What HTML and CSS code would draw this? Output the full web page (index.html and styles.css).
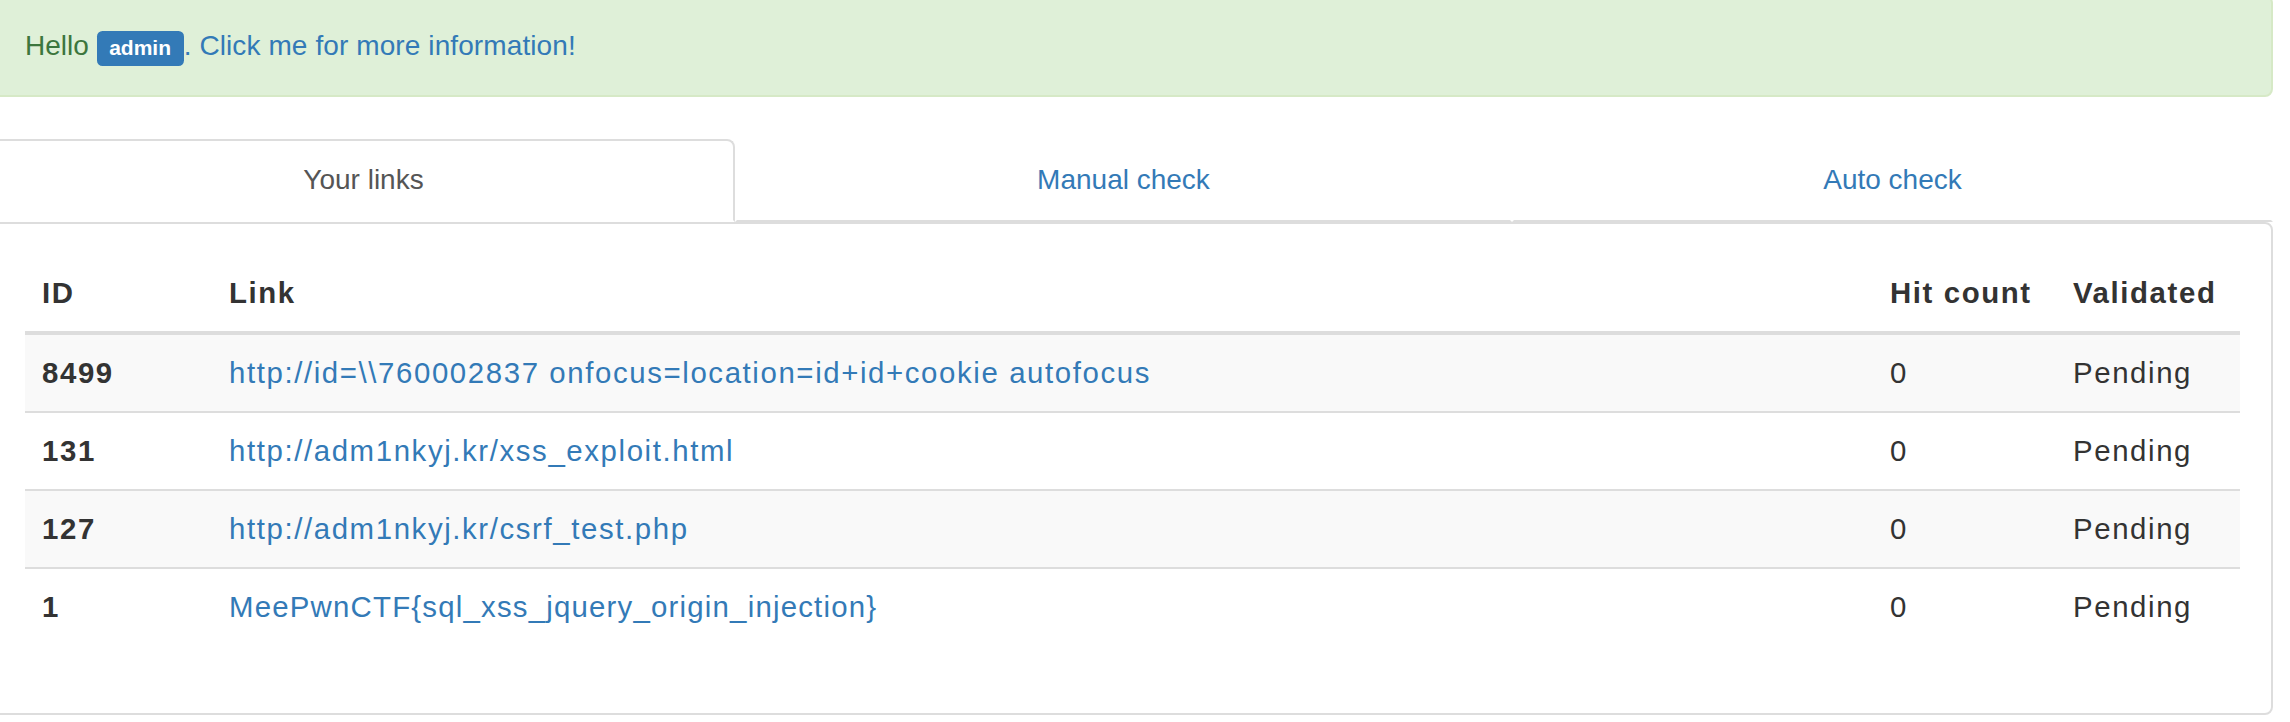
FILE: index.html
```html
<!DOCTYPE html>
<html lang="en">
<head>
<meta charset="utf-8">
<title>Your links</title>
<link rel="stylesheet" href="styles.css">
</head>
<body>
<div class="page">
  <div class="alert">Hello <span class="label">admin</span><a class="alert-link" href="#">. Click me for more information!</a></div>

  <ul class="tabs">
    <li class="tab active"><a href="#">Your links</a></li>
    <li class="tab"><a href="#">Manual check</a></li>
    <li class="tab"><a href="#">Auto check</a></li>
  </ul>

  <div class="panel">
    <table class="links">
      <colgroup>
        <col class="c-id">
        <col class="c-link">
        <col class="c-hit">
        <col class="c-val">
      </colgroup>
      <thead>
        <tr><th>ID</th><th>Link</th><th>Hit count</th><th>Validated</th></tr>
      </thead>
      <tbody>
        <tr><td class="id">8499</td><td><a href="#">http://id=\\760002837 onfocus=location=id+id+cookie autofocus</a></td><td>0</td><td>Pending</td></tr>
        <tr><td class="id">131</td><td><a href="#">http://adm1nkyj.kr/xss_exploit.html</a></td><td>0</td><td>Pending</td></tr>
        <tr><td class="id">127</td><td><a href="#">http://adm1nkyj.kr/csrf_test.php</a></td><td>0</td><td>Pending</td></tr>
        <tr><td class="id">1</td><td><a class="flag" href="#">MeePwnCTF{sql_xss_jquery_origin_injection}</a></td><td>0</td><td>Pending</td></tr>
      </tbody>
    </table>
  </div>
</div>
</body>
</html>
```
FILE: styles.css
```css
html, body {
  margin: 0;
  padding: 0;
  background: #fff;
}

.page {
  margin: -5px 0 0 -8px;
  width: 2281px;
  font-family: "Liberation Sans", Arial, Helvetica, sans-serif;
  font-size: 29.4px;
  line-height: 42px;
  color: #333;
}

a {
  color: #337ab7;
  text-decoration: none;
}

.alert {
  background: #dff0d8;
  border: 2px solid #d6e9c6;
  border-radius: 8px;
  padding: 28px 31px;
  color: #3c763d;
  font-size: 28px;
  margin-bottom: 42px;
}

.alert-link {
  letter-spacing: 0.1px;
}

.label {
  font-size: 21px;
  font-weight: bold;
  line-height: 1;
  color: #fff;
  background: #337ab7;
  padding: 5px 12.6px 7px;
  border-radius: 5.5px;
}

.tabs {
  list-style: none;
  margin: 0;
  padding: 0;
  display: grid;
  grid-template-columns: 743px 777px 1fr;
  font-size: 28px;
}

.tab {
  text-align: center;
  padding: 18px 0 19px;
  border: 2px solid transparent;
  border-bottom-color: #ddd;
  border-radius: 8px 8px 0 0;
}

.tab.active {
  border-color: #ddd;
  border-bottom-color: #fff;
}

.tab.active a {
  color: #555;
}

.panel {
  border: 2px solid #ddd;
  border-radius: 0 8px 8px 8px;
  padding: 31px;
}

.links {
  width: 100%;
  border-collapse: collapse;
  table-layout: fixed;
  margin-bottom: 37px;
  letter-spacing: 1.6px;
}

.c-id { width: 187px; }
.c-hit { width: 183px; }
.c-val { width: 184px; }

.links th,
.links td {
  padding: 17px;
  text-align: left;
  line-height: 42px;
  white-space: nowrap;
}

.links th {
  font-weight: bold;
  vertical-align: bottom;
  border-bottom: 4px solid #ddd;
}

.links td {
  border-top: 2px solid #ddd;
}

.links tbody tr:first-child td {
  border-top: 0;
}

.links tbody tr:nth-child(odd) {
  background: #f9f9f9;
}

.links td.id {
  font-weight: bold;
}

.links .flag {
  letter-spacing: 1.2px;
}
```
